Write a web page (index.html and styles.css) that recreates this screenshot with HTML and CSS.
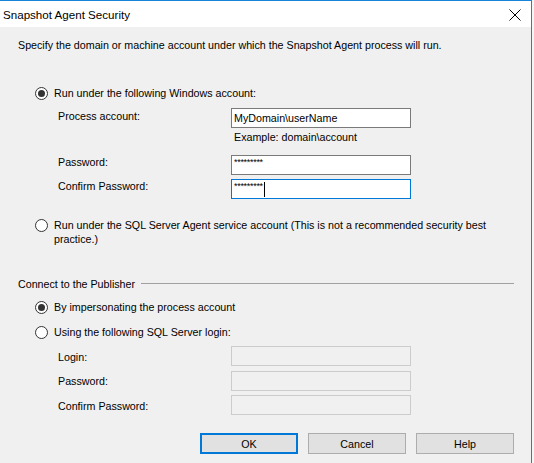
FILE: index.html
```html
<!DOCTYPE html>
<html>
<head>
<meta charset="utf-8">
<title>Snapshot Agent Security</title>
<link rel="stylesheet" href="styles.css">
</head>
<body>
<div class="window">
  <div class="titlebar">
    <span class="title">Snapshot Agent Security</span>
    <svg class="close" width="12" height="12" viewBox="0 0 12 12"><path d="M0.5 0.5 L11.5 11.5 M11.5 0.5 L0.5 11.5" stroke="#000" stroke-width="1" fill="none"/></svg>
  </div>
  <div class="content">
    <div class="intro">Specify the domain or machine account under which the Snapshot Agent process will run.</div>

    <div class="radio-row r1"><span class="radio checked"></span><span class="rlabel">Run under the following Windows account:</span></div>
    <div class="fields">
      <div class="field f-process"><span class="flabel p1">Process account:</span><div class="textbox">MyDomain\userName</div></div>
      <div class="example">Example: domain\account</div>
      <div class="field f-pw"><span class="flabel">Password:</span><div class="textbox"><span class="stars">*********</span></div></div>
      <div class="field f-confirm"><span class="flabel">Confirm Password:</span><div class="textbox focus"><span class="stars">*********</span><span class="caret"></span></div></div>
    </div>

    <div class="radio-row r2 multi"><span class="radio"></span><span class="rlabel wrap">Run under the SQL Server Agent service account (This is not a recommended security best practice.)</span></div>

    <div class="group-head"><span>Connect to the Publisher</span><span class="rule"></span></div>
    <div class="radio-row r3"><span class="radio checked"></span><span class="rlabel">By impersonating the process account</span></div>
    <div class="radio-row r4"><span class="radio"></span><span class="rlabel">Using the following SQL Server login:</span></div>
    <div class="fields">
      <div class="field f-login"><span class="flabel p4">Login:</span><div class="textbox disabled"></div></div>
      <div class="field f-pw2"><span class="flabel p3">Password:</span><div class="textbox disabled"></div></div>
      <div class="field f-confirm2"><span class="flabel p4">Confirm Password:</span><div class="textbox disabled"></div></div>
    </div>

    <div class="buttons">
      <div class="btn default">OK</div>
      <div class="btn">Cancel</div>
      <div class="btn">Help</div>
    </div>
  </div>
</div>
</body>
</html>
```

FILE: styles.css
```css
html { background: #f5f5f5; }
body {
  margin: 0;
  font-family: "Liberation Sans", Arial, sans-serif;
  font-size: 10.7px;
  color: #000;
}
.window {
  box-sizing: border-box;
  width: 532px;
  height: 463px;
  border-top: 1px solid #1883d7;
  border-right: 1px solid #1883d7;
  background: #f0f0f0;
  overflow: hidden;
}
.titlebar {
  height: 26px;
  background: #fff;
  display: flex;
  align-items: center;
  padding-left: 3px;
}
.title {
  font-size: 11.6px;
  flex: 1;
}
.close {
  margin-right: 10px;
  margin-top: 1px;
}
.content {
  padding: 11px 0 0 18px;
}
.intro {
  line-height: 14px;
}
.radio-row {
  display: flex;
  align-items: center;
  margin-left: 17px;
  line-height: 14px;
  gap: 6px;
}
.radio-row.multi { align-items: flex-start; }
.radio {
  box-sizing: border-box;
  width: 13px;
  height: 13px;
  border: 1px solid #333;
  border-radius: 50%;
  background: #fff;
  flex: none;
  display: flex;
  align-items: center;
  justify-content: center;
}
.radio.checked::after {
  content: "";
  width: 7px;
  height: 7px;
  border-radius: 50%;
  background: #333;
}
.r1 { margin-top: 34px; }
.r2 { margin-top: 19px; }
.r2 .radio { margin-top: 1px; }
.wrap { width: 455px; }
.r3 { margin-top: 9px; }
.r4 { margin-top: 11px; }
.fields {
  margin-left: 40px;
}
.field {
  display: flex;
  height: 20px;
  line-height: 14px;
}
.flabel {
  width: 173px;
  flex: none;
}
.p1 { padding-top: 1px; }
.p3 { padding-top: 3px; }
.p4 { padding-top: 4px; }
.textbox {
  box-sizing: border-box;
  width: 180px;
  height: 20px;
  border: 1px solid #7a7a7a;
  background: #fff;
  padding-left: 2px;
  line-height: 18px;
  display: flex;
  align-items: center;
}
.textbox.focus { border-color: #0078d7; }
.textbox.disabled {
  border-color: #cccccc;
  background: #f0f0f0;
}
.stars {
  font-size: 9px;
  letter-spacing: -0.3px;
  align-self: flex-start;
  line-height: 12px;
}
.caret {
  width: 1px;
  height: 15px;
  background: #000;
  margin-left: 1px;
}
.f-process { margin-top: 8px; }
.example {
  margin-left: 176px;
  margin-top: 2px;
  line-height: 14px;
}
.f-pw { margin-top: 11px; }
.f-confirm { margin-top: 4px; }
.group-head {
  margin-top: 31px;
  display: flex;
  align-items: center;
  line-height: 14px;
  margin-right: 17px;
}
.rule {
  flex: 1;
  border-top: 1px solid #a0a0a0;
  margin-left: 6px;
  margin-top: -1px;
}
.f-login { margin-top: 7px; }
.f-pw2 { margin-top: 5px; }
.f-confirm2 { margin-top: 4px; }
.buttons {
  display: flex;
  gap: 10px;
  margin-top: 18px;
  margin-left: 182px;
}
.btn {
  box-sizing: border-box;
  width: 98px;
  height: 21px;
  border: 1px solid #adadad;
  background: #e1e1e1;
  display: flex;
  align-items: center;
  justify-content: center;
}
.btn.default {
  border: 2px solid #0078d7;
}
```
